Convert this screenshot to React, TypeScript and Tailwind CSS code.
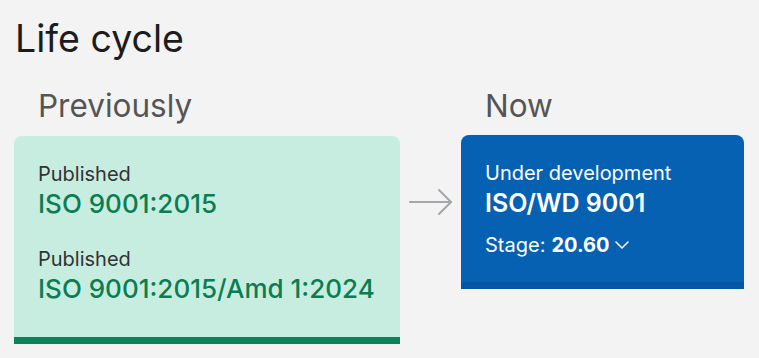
import React from 'react';
import { ChevronDown } from 'lucide-react';

const font = { fontFamily: 'Inter, "Noto Sans", sans-serif' };

export default function App() {
  return (
    <div className="min-h-[358px] w-[759px] bg-[#f3f3f3] pl-[15px] pt-4 text-[#1a1a1a]" style={font}>
      <h1 className="text-[37.5px] leading-[46px] font-normal text-[#1c1c1c]">Life cycle</h1>

      <div className="mt-6 grid grid-cols-[386px_61px_283px] -ml-px">
        {/* headings */}
        <h2 className="pl-6 text-[31.5px] leading-[40px] text-[#555555]">Previously</h2>
        <div />
        <h2 className="pl-6 text-[31.5px] leading-[40px] text-[#555555]">Now</h2>

        {/* previous card */}
        <div className="mt-[10px] self-start rounded-t-lg border-b-[7px] border-[#0a8459] bg-[#c7ede1] px-6 pt-6 pb-8">
          <div className="text-[20px] leading-[28px] text-[#333333]">Published</div>
          <div className="text-[26px] leading-[32px] font-medium text-[#0b7d52]">ISO 9001:2015</div>
          <div className="mt-[25px] text-[20px] leading-[28px] text-[#333333]">Published</div>
          <div className="text-[26px] leading-[32px] font-medium text-[#0b7d52]">ISO 9001:2015/Amd 1:2024</div>
        </div>

        {/* arrow */}
        <div className="flex justify-center pt-[62px]">
          <svg width="44" height="28" viewBox="0 0 44 28" fill="none" stroke="#a3a6aa" strokeWidth="2" strokeLinecap="round" strokeLinejoin="round">
            <path d="M1 14h41" />
            <path d="M30 2l12 12-12 12" />
          </svg>
        </div>

        {/* current card */}
        <div className="mt-[9px] self-start rounded-t-lg border-b-[7px] border-[#0557a4] bg-[#0661b3] px-6 pt-6 pb-[23px] text-white">
          <div className="text-[20px] leading-[28px]">Under development</div>
          <div className="text-[25px] leading-[32px] font-semibold">ISO/WD 9001</div>
          <div className="mt-3 flex items-center text-[20px] leading-[28px]">
            <span>Stage:</span>
            <span className="ml-[6px] font-bold">20.60</span>
            <ChevronDown size={24} strokeWidth={1.5} className="ml-[1px]" />
          </div>
        </div>
      </div>
    </div>
  );
}
